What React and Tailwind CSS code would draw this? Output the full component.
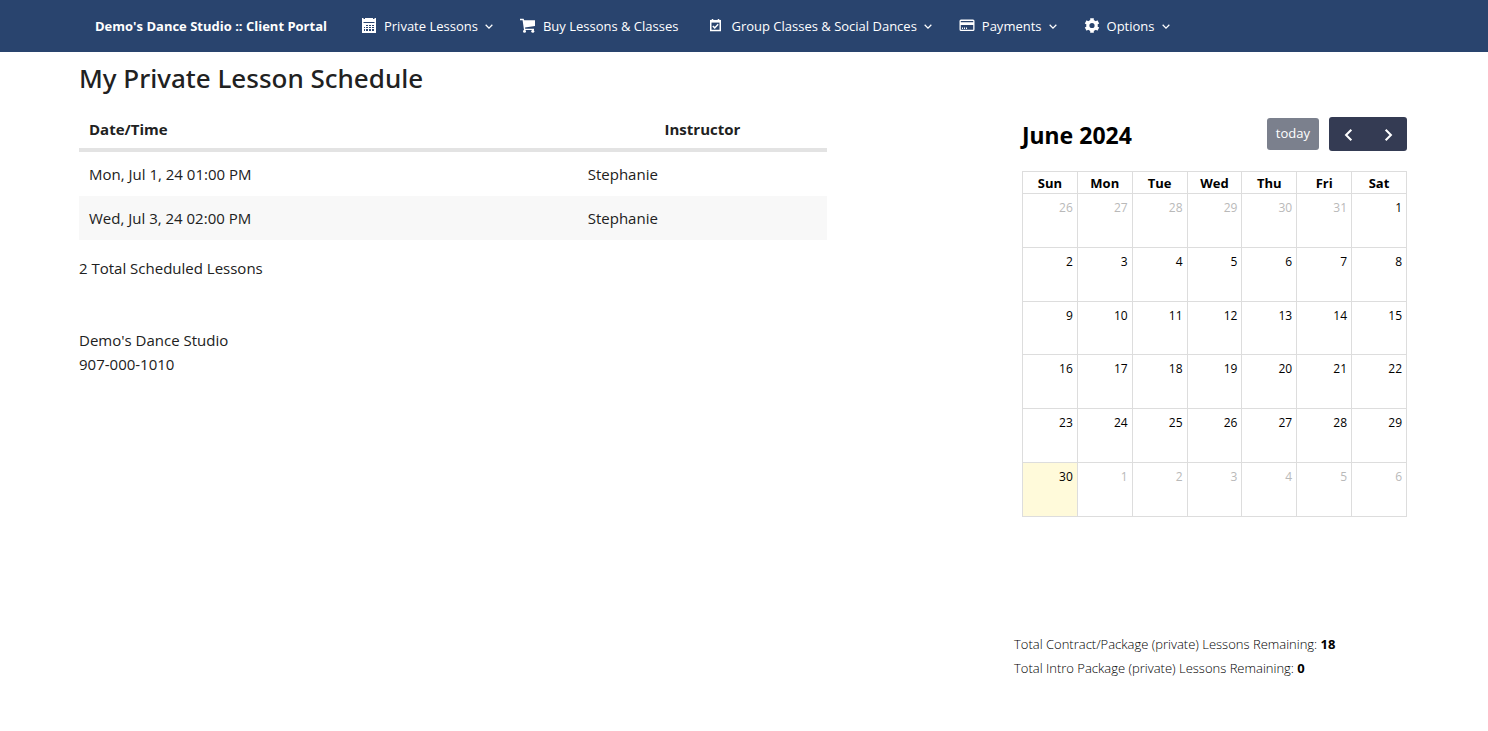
const NAV = [
  { label: 'Private Lessons', icon: CalendarGridIcon, menu: true },
  { label: 'Buy Lessons & Classes', icon: CartIcon, menu: false },
  { label: 'Group Classes & Social Dances', icon: CalendarCheckIcon, menu: true },
  { label: 'Payments', icon: CardIcon, menu: true },
  { label: 'Options', icon: GearIcon, menu: true },
];

const LESSONS = [
  { when: 'Mon, Jul 1, 24 01:00 PM', instructor: 'Stephanie' },
  { when: 'Wed, Jul 3, 24 02:00 PM', instructor: 'Stephanie' },
];

const WEEKDAYS = ['Sun', 'Mon', 'Tue', 'Wed', 'Thu', 'Fri', 'Sat'];

const WEEKS = Array.from({ length: 6 }, (_, week) =>
  Array.from({ length: 7 }, (_, day) => {
    const date = new Date(2024, 4, 26 + week * 7 + day);
    return { num: date.getDate(), inMonth: date.getMonth() === 5 };
  })
);

function CalendarGridIcon() {
  return (
    <svg viewBox="0 0 16 16" className="size-4 shrink-0" fill="currentColor" aria-hidden="true">
      <path d="M1 0h1.5v1h1.500V0h8v1h1.500V0H15v3H1z" />
      <path fillRule="evenodd" d="M1 2.500h14V15H1zM2.500 4v1h11V4zM5 7v1h2V7zM8 7v1h2V7zM11 7v1h2V7zM3 9v1h1V9zM5 9v1h2V9zM8 9v1h2V9zM11 9v1h2V9zM3 11v2h1v-2zM5 11v2h2v-2zM8 11v2h2v-2zM11 11v2h2v-2z" />
    </svg>
  );
}

function CartIcon() {
  return (
    <svg viewBox="0 0 16 16" className="size-4 shrink-0" fill="currentColor" aria-hidden="true">
      <path d="M0 .8h3.600l.6 1.400H15V8L5 9.500l.2 1.200H14V12H4L2.600 2.200H0z" />
      <circle cx="4.500" cy="13.300" r="1.500" />
      <circle cx="12.800" cy="13.300" r="1.500" />
    </svg>
  );
}

function CalendarCheckIcon() {
  return (
    <svg viewBox="0 0 16 16" className="size-4 shrink-0" fill="none" stroke="currentColor" aria-hidden="true">
      <path strokeWidth="1.500" d="M2.750 3.500h9.500v9h-9.500z" />
      <path strokeWidth="2.500" d="M2 3.200h11" />
      <path strokeWidth="1.500" d="M4.500 1v2M10.500 1v2" />
      <path strokeWidth="1.500" d="M4.800 8l1.900 1.900 3.500-3.700" />
    </svg>
  );
}

function CardIcon() {
  return (
    <svg viewBox="0 0 16 16" className="size-4 shrink-0" fill="currentColor" aria-hidden="true">
      <path
        fillRule="evenodd"
        d="M2 1.500h12A1.500 1.500 0 0 1 15.500 3v8.500a1.500 1.500 0 0 1-1.500 1.500H2A1.500 1.500 0 0 1 .5 11.500V3A1.500 1.500 0 0 1 2 1.500zM1.800 3v1.300h12.400V3zM1.800 7v4.700h12.400V7z"
      />
      <path d="M3 9.500h1V11H3zM5 9.500h1V11H5zM7 9.500h1V11H7z" />
    </svg>
  );
}

function GearIcon() {
  const teeth = [0, 60, 120];
  return (
    <svg viewBox="0 0 16 16" className="size-4 shrink-0" fill="none" stroke="currentColor" aria-hidden="true">
      <circle cx="8" cy="7.500" r="4.200" strokeWidth="3.200" />
      {teeth.map((a) => (
        <path key={a} transform={`rotate(${a} 8 7.500)`} strokeWidth="3.600" d="M8 .2v2.800M8 12v2.800" />
      ))}
    </svg>
  );
}

function Chevron({ direction, className }) {
  const paths = {
    down: 'M2 4.500l4 4 4-4',
    left: 'M8 1.500L3.500 6 8 10.500',
    right: 'M4 1.500L8.500 6 4 10.500',
  };
  return (
    <svg viewBox="0 0 12 12" className={className} fill="none" stroke="currentColor" aria-hidden="true">
      <path d={paths[direction]} />
    </svg>
  );
}

function NavBar() {
  return (
    <header className="bg-[#29446e] text-white">
      <nav className="mx-auto flex h-[52px] max-w-[1360px] items-center pl-[31px] text-[13px] leading-5">
        <a href="#home" className="mr-[34px] font-bold whitespace-nowrap">
          Demo's Dance Studio :: Client Portal
        </a>
        <ul className="flex items-center gap-[26px]">
          {NAV.map(({ label, icon: Icon, menu }) => (
            <li key={label} className={menu ? '' : 'pr-1'}>
              <a href="#menu" className="flex items-center whitespace-nowrap">
                <Icon />
                <span className="ml-[7px]">{label}</span>
                {menu && <Chevron direction="down" className="ml-[6px] size-[10px] stroke-[1.5]" />}
              </a>
            </li>
          ))}
        </ul>
      </nav>
    </header>
  );
}

function LessonTable() {
  return (
    <table className="w-full table-fixed border-collapse text-left text-[15px] leading-6">
      <thead>
        <tr className="border-b-4 border-[#e3e3e3]">
          <th className="w-2/3 px-[10px] pt-[9px] pb-[7px] font-bold">Date/Time</th>
          <th className="px-[10px] pt-[9px] pb-[7px] text-center font-bold">Instructor</th>
        </tr>
      </thead>
      <tbody>
        {LESSONS.map((l) => (
          <tr key={l.when} className="even:bg-[#f8f8f8]">
            <td className="p-[10px]">{l.when}</td>
            <td className="p-[10px]">{l.instructor}</td>
          </tr>
        ))}
      </tbody>
    </table>
  );
}

function MonthCalendar() {
  return (
    <div className="pr-[2px] pl-2 text-black">
      <div className="flex items-center justify-between">
        <h2 className="pt-[2px] font-['Noto_Sans',sans-serif] text-[23px] leading-8 font-bold">June 2024</h2>
        <div className="flex items-center gap-[10px]">
          <button type="button" disabled className="h-8 rounded-[3px] bg-[#7b808d] px-[9px] text-[13px] text-white">
            today
          </button>
          <div className="flex h-[34px] rounded-[3px] bg-[#343b53] text-white">
            <button type="button" aria-label="Previous month" className="flex w-[39px] items-center justify-center pt-[2px]">
              <Chevron direction="left" className="size-[14px] stroke-[1.75]" />
            </button>
            <button type="button" aria-label="Next month" className="flex w-[39px] items-center justify-center pt-[2px]">
              <Chevron direction="right" className="size-[14px] stroke-[1.75]" />
            </button>
          </div>
        </div>
      </div>
      <table className="mt-5 h-[346px] w-full table-fixed border-collapse text-[12px]">
        <thead>
          <tr>
            {WEEKDAYS.map((d) => (
              <th key={d} className="h-[22px] border border-[#dddddd] p-0 text-center text-[13px] leading-5 font-bold">
                {d}
              </th>
            ))}
          </tr>
        </thead>
        <tbody>
          {WEEKS.map((week, i) => (
            <tr key={i}>
              {week.map(({ num, inMonth }) => (
                <td
                  key={num}
                  className={
                    'border border-[#dddddd] px-1 pt-[5px] text-right align-top leading-[18px] ' +
                    (inMonth ? (num === 30 ? 'bg-[#fffada]' : '') : 'text-[#b9b9b9]')
                  }
                >
                  {num}
                </td>
              ))}
            </tr>
          ))}
        </tbody>
      </table>
    </div>
  );
}

export default function App() {
  return (
    <div className="bg-white font-['Open_Sans','Noto_Sans',sans-serif] text-[#212121]">
      <NavBar />
      <main className="mx-auto flex max-w-[1360px] items-start justify-between px-[15px]">
        <section className="w-[56.25%] pt-2">
          <h1 className="font-['Noto_Sans',sans-serif] text-[26px] leading-9 font-medium">My Private Lesson Schedule</h1>
          <div className="mt-3">
            <LessonTable />
          </div>
          <p className="mt-4 text-[15px] leading-6">2 Total Scheduled Lessons</p>
          <address className="mt-12 text-[15px] leading-6 not-italic">
            Demo's Dance Studio
            <br />
            907-000-1010
          </address>
        </section>
        <aside className="w-[29.7%] pt-[65px]">
          <MonthCalendar />
          <div className="mt-[115px] text-[13px] leading-6 font-light text-black">
            <p>
              Total Contract/Package (private) Lessons Remaining: <strong className="font-bold">18</strong>
            </p>
            <p>
              Total Intro Package (private) Lessons Remaining: <strong className="font-bold">0</strong>
            </p>
          </div>
        </aside>
      </main>
    </div>
  );
}
